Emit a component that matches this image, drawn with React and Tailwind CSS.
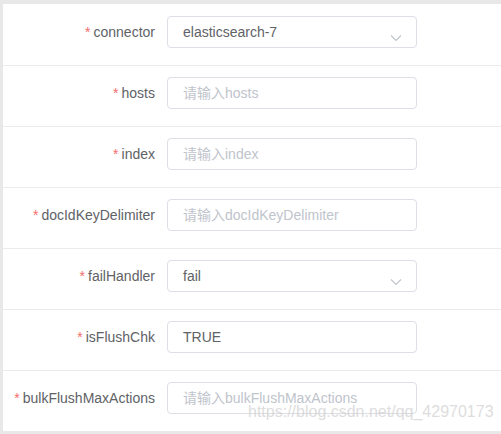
import React from "react";

const rows = [
  { label: "connector", type: "select", value: "elasticsearch-7" },
  { label: "hosts", type: "input", placeholder: "请输入hosts" },
  { label: "index", type: "input", placeholder: "请输入index" },
  { label: "docIdKeyDelimiter", type: "input", placeholder: "请输入docIdKeyDelimiter" },
  { label: "failHandler", type: "select", value: "fail" },
  { label: "isFlushChk", type: "input", value: "TRUE" },
  { label: "bulkFlushMaxActions", type: "input", placeholder: "请输入bulkFlushMaxActions" },
];

function Chevron() {
  return (
    <svg width="12" height="8" viewBox="0 0 12 8" className="absolute right-[14px] top-[17px]">
      <path d="M1 1.5 L6 6.5 L11 1.5" fill="none" stroke="#c0c4cc" strokeWidth="1.1" />
    </svg>
  );
}

export default function App() {
  return (
    <div
      className="w-[501px] h-[434px] bg-white border-t-[4px] border-l-[3px] border-b-[3px] border-[#e8e8e8] overflow-hidden relative pt-[1px]"
      style={{ fontFamily: '"Liberation Sans", "Noto Sans CJK SC", sans-serif' }}
    >
      {rows.map((r, i) => (
        <div
          key={r.label}
          className={`flex items-start pt-[11px] h-[61px] ${i < rows.length - 1 ? "border-b border-[#ebebeb]" : ""}`}
        >
          <div className="w-[152px] h-[32px] leading-[32px] text-right text-[14px] text-[#606266] shrink-0">
            <span className="text-[#f56c6c] mr-[3px]">*</span>
            {r.label}
          </div>
          <div className="ml-[12px] relative w-[250px] h-[32px] border border-[#dcdfe6] rounded-[4px] flex items-center pl-[15px] text-[14px]">
            {r.placeholder ? (
              <span className="text-[#c0c4cc]">{r.placeholder}</span>
            ) : (
              <span className="text-[#606266]">{r.value}</span>
            )}
            {r.type === "select" && <Chevron />}
          </div>
        </div>
      ))}
      <div className="absolute left-[245px] top-[399px] text-[16px] leading-[18px] text-[#d0d0d0] opacity-70 whitespace-nowrap">
        https://blog.csdn.net/qq_42970173
      </div>
    </div>
  );
}
